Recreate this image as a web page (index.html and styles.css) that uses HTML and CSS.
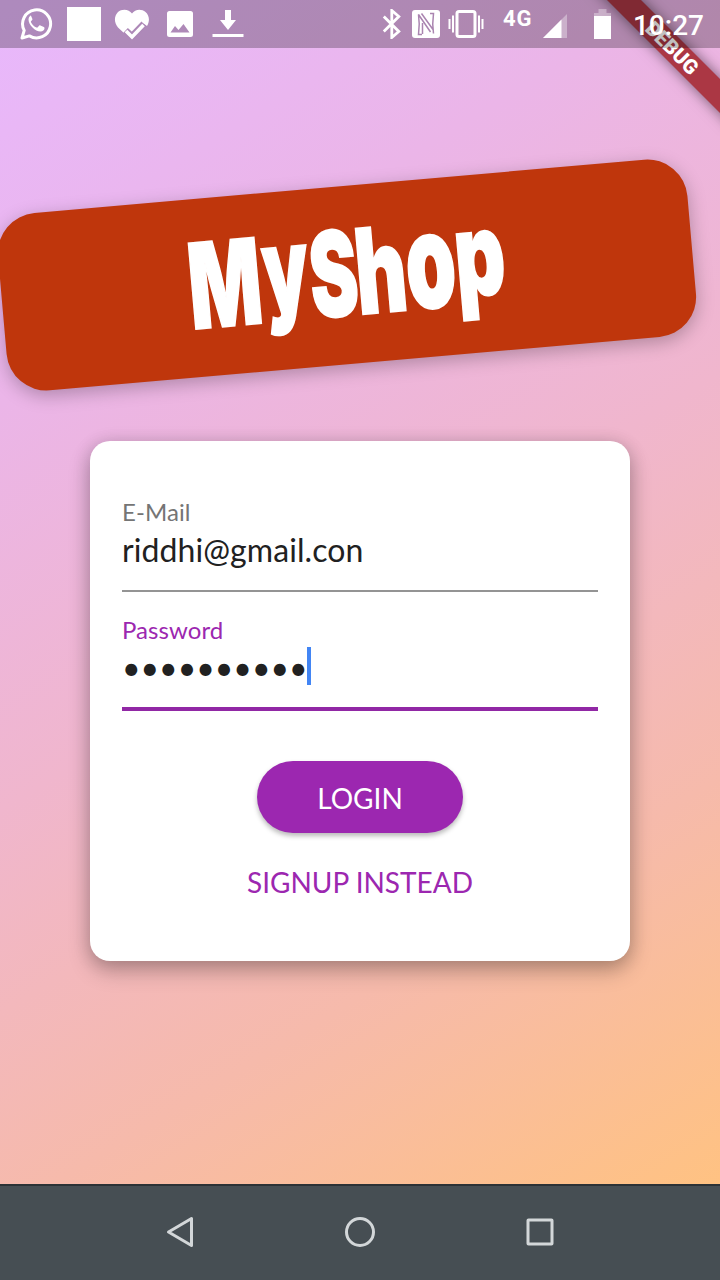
FILE: index.html
```html
<!DOCTYPE html>
<html lang="en">
<head>
<meta charset="utf-8">
<title>MyShop</title>
<link rel="stylesheet" href="styles.css">
</head>
<body>
<div class="phone">
  <header class="status-bar">
    <div class="notifications">
      <svg class="whatsapp" width="34" height="34" viewBox="0 0 34 34"><path d="M3 31 5.2 23.4A14 14 0 1 1 10.400000 28.9Z" fill="none" stroke="#fff" stroke-width="3" stroke-linejoin="round"/><path d="M11.500 9.500c-1 0-2.500 1.600-2.500 3.800 0 5.500 6.800 12 12 12 2.300 0 4-1.500 4-3.200 0-.7-.2-.9-.7-1.200l-3.400-1.700c-.6-.3-.9-.2-1.300.3l-1.400 1.600c-.4.4-.7.4-1.200.2-2.300-1-4.300-2.900-5.500-5.300-.2-.5-.2-.7.2-1.100l1-1.200c.3-.4.3-.7.1-1.200l-1.300-3c-.2-.5-.6-.6-1-.6z" transform="translate(.5 -.8)" fill="#fff"/></svg>
      <span class="square-note"></span>
      <svg class="heart" width="36" height="34" viewBox="0 0 36 34"><path d="M18 4.500C15 0 8-.5 4 3 0 7-.2 13.500 4 18.500l7 6.500 2-3.500 5.500 4 11-11 3.500 2.500C36 12 35.500 6.500 31.500 3 27.500-.5 21 0 18 4.500Z" fill="#fff"/><path d="M11.500 21.500 18 27.500 30 15" fill="none" stroke="#ad88b7" stroke-width="7" stroke-linejoin="round"/><path d="M12 22 18 28 29.500 16" fill="none" stroke="#fff" stroke-width="3.600"/></svg>
      <svg class="image" width="28" height="28" viewBox="0 0 28 28"><path fill="#fff" fill-rule="evenodd" d="M3.500 1h21A2.500 2.500 0 0 1 27 3.500v21a2.500 2.500 0 0 1-2.500 2.500h-21A2.500 2.500 0 0 1 1 24.500v-21A2.500 2.500 0 0 1 3.500 1ZM4.500 22.500h19L17.500 14l-5 6-3.500-4Z"/></svg>
      <svg class="download" width="32" height="28" viewBox="0 0 32 28"><path fill="#fff" d="M13 0h6v10h5l-8 10-8-10h5ZM.5 24h31v3H.5Z"/></svg>
    </div>
    <div class="system">
      <svg class="bluetooth" width="20" height="30" viewBox="0 0 20 30"><path d="m1.800 7.500 15 15-7 6v-27l7 6-15 15" fill="none" stroke="#fff" stroke-width="2.800"/></svg>
      <svg class="nfc" width="28" height="28" viewBox="0 0 28 28"><rect width="28" height="28" rx="3" fill="#fff"/><path d="M10 24.500H6.500Q8 14 6.500 4.500L18.500 22M9.500 3.500 21 19.500M18 3.500H21.500Q20 14 21.500 23.500M10.500 13V24" fill="none" stroke="#aa84b0" stroke-width="1.500"/></svg>
      <svg class="vibrate" width="36" height="30" viewBox="0 0 36 30"><rect x="9" y="2.500" width="18" height="25" rx="2" fill="none" stroke="#fff" stroke-width="3"/><path d="M1.500 10v10M5 6.500v17M31 6.500v17M34.500 10v10" stroke="#fff" stroke-width="2"/></svg>
      <span class="network">4G</span>
      <svg class="signal" width="24" height="24" viewBox="0 0 24 24"><path d="M0 24 24 0v24Z" fill="#fff" fill-opacity=".35"/><path d="M0 24 18.500 5.500V24Z" fill="#fff"/></svg>
      <svg class="battery" width="17" height="30" viewBox="0 0 17 30"><path d="M4.500 0h8v4H17v4H0V4h4.500Z" fill="#fff" fill-opacity=".35"/><path d="M0 7h17v23H0Z" fill="#fff"/></svg>
      <time class="clock">10:27</time>
    </div>
  </header>

  <div class="debug-banner">DEBUG</div>

  <main class="content">
    <h1 class="logo">
      <svg width="692" height="179" viewBox="0 0 692 179"><text class="logo-text"><tspan x="187" y="129.500" textLength="73" lengthAdjust="spacingAndGlyphs">M</tspan><tspan class="low" x="262" y="119" textLength="46" lengthAdjust="spacingAndGlyphs">y</tspan><tspan x="308.500" y="129.500" textLength="48" lengthAdjust="spacingAndGlyphs">S</tspan><tspan x="354.500" y="129.500" textLength="51" lengthAdjust="spacingAndGlyphs">h</tspan><tspan class="round" x="405" y="129" textLength="50" lengthAdjust="spacingAndGlyphs">o</tspan><tspan class="low" x="454.500" y="121" textLength="50" lengthAdjust="spacingAndGlyphs">p</tspan></text></svg>
    </h1>
    <form class="card">
      <div class="field">
        <label class="label">E-Mail</label>
        <div class="value">riddhi@gmail.con</div>
      </div>
      <div class="field focused">
        <label class="label">Password</label>
        <div class="value"><span class="dots">••••••••••</span><span class="caret"></span></div>
      </div>
      <button class="login" type="button">LOGIN</button>
      <button class="signup" type="button">SIGNUP INSTEAD</button>
    </form>
  </main>

  <nav class="nav-bar">
    <svg width="30" height="34" viewBox="0 0 30 34"><path d="M3.500 17 26.500 3.500v27Z" fill="none" stroke="#d3d7d9" stroke-width="3" stroke-linejoin="round"/></svg>
    <svg width="34" height="34" viewBox="0 0 34 34"><circle cx="17" cy="17" r="13.500" fill="none" stroke="#d3d7d9" stroke-width="3"/></svg>
    <svg width="30" height="34" viewBox="0 0 30 34"><rect x="3" y="5" width="24" height="24" rx=".5" fill="none" stroke="#d3d7d9" stroke-width="3"/></svg>
  </nav>
</div>
</body>
</html>
```
FILE: styles.css
```css
* { box-sizing: border-box; }
body { margin: 0; }

.phone {
  position: relative;
  display: flex;
  flex-direction: column;
  width: 720px;
  height: 1280px;
  overflow: hidden;
  font-family: Lato, sans-serif;
  background: linear-gradient(148.7deg, #e8b8fd 0%, #ebb5e8 25%, #f0b6cd 50%, #f6baab 75%, #ffc282 100%) 0 0 / 720px 1184px no-repeat;
}

.status-bar {
  position: relative;
  z-index: 2;
  flex: none;
  display: flex;
  justify-content: space-between;
  height: 48px;
  padding: 0 16px 0 19px;
  background: rgba(0, 0, 0, .25);
  color: #fff;
  font-family: Roboto, sans-serif;
}
.notifications, .system { display: flex; align-items: center; }
.notifications { gap: 14px; }
.square-note { width: 34px; height: 34px; background: #fff; }
.heart { margin-right: 2px; margin-left: -1px; margin-top: 3px; }
.image { margin-right: 4px; }
.bluetooth { margin-right: 10px; }
.nfc { margin-right: 8px; }
.vibrate { margin-right: 18px; }
.network { width: 31px; margin: -10px 9px 0 1px; font-size: 22px; font-weight: 700; line-height: 26px; letter-spacing: .8px; }
.signal { margin: 4px 27px 0 0; }
.battery { margin-right: 22px; }
.clock { font-size: 28px; font-weight: 500; line-height: 48px; padding-top: 3px; }

.debug-banner {
  position: absolute;
  z-index: 1;
  top: 36px;
  left: 572px;
  width: 200px;
  height: 24px;
  transform: rotate(45deg);
  background: #ab3744;
  box-shadow: 0 0 14px rgba(0, 0, 0, .5);
  color: #fff;
  font: 900 20.4px/24px Roboto, sans-serif;
  text-align: center;
}

.content {
  flex: none;
  display: flex;
  flex-direction: column;
  height: 1136px;
  padding-top: 137.500px;
}
.logo {
  width: 692px;
  height: 178px;
  margin: 0 0 77.500px 1px;
  border-radius: 40px;
  background: #bf360c;
  box-shadow: 0 5px 18px rgba(0, 0, 0, .26);
  transform: rotate(-5deg);
}
.logo svg { display: block; }
.logo-text {
  font: 900 118px Inter, sans-serif;
  fill: #fff;
  stroke: #fff;
  stroke-width: 2px;
}
.logo-text .low { font-size: 116px; }
.logo-text .round { font-size: 132px; }

.card {
  align-self: center;
  display: flex;
  flex-direction: column;
  align-items: center;
  width: 540px;
  height: 520px;
  padding: 32px;
  border-radius: 20px;
  background: #fff;
  box-shadow: 0 10px 22px rgba(0, 0, 0, .23), 0 2px 18px rgba(0, 0, 0, .16);
}
.field {
  width: 476px;
  height: 119px;
  padding-top: 24px;
  border-bottom: 2px solid #949494;
}
.field.focused { padding-top: 23px; height: 119px; border-bottom: 4px solid #9128a5; }
.label { display: block; font-size: 24px; line-height: 30px; letter-spacing: .08px; color: #757575; }
.focused .label { color: #9c27b0; }
.value { display: flex; align-items: center; height: 44px; padding-top: 1px; font-size: 32px; line-height: 44px; letter-spacing: .08px; color: #212121; }
.focused .value { padding-top: 2px; letter-spacing: 0; }
.caret { width: 4px; height: 38px; margin: -4px 0 0 -1px; background: #4285f4; }
.login, .signup {
  flex: none;
  border: 0;
  padding: 2px 0 0;
  background: none;
  font: 400 28px/36px Lato, sans-serif;
}
.login {
  width: 206px;
  height: 72px;
  margin: 50px 0 29px;
  border-radius: 36px;
  background: #9c27b0;
  box-shadow: 0 3px 5px rgba(0, 0, 0, .28);
  color: #fff;
}
.signup { color: #9c27b0; }

.nav-bar {
  flex: none;
  display: flex;
  justify-content: center;
  align-items: center;
  gap: 148px;
  height: 96px;
  padding-bottom: 2px;
  border-top: 2px solid #2c3236;
  background: #464e53;
}
```
